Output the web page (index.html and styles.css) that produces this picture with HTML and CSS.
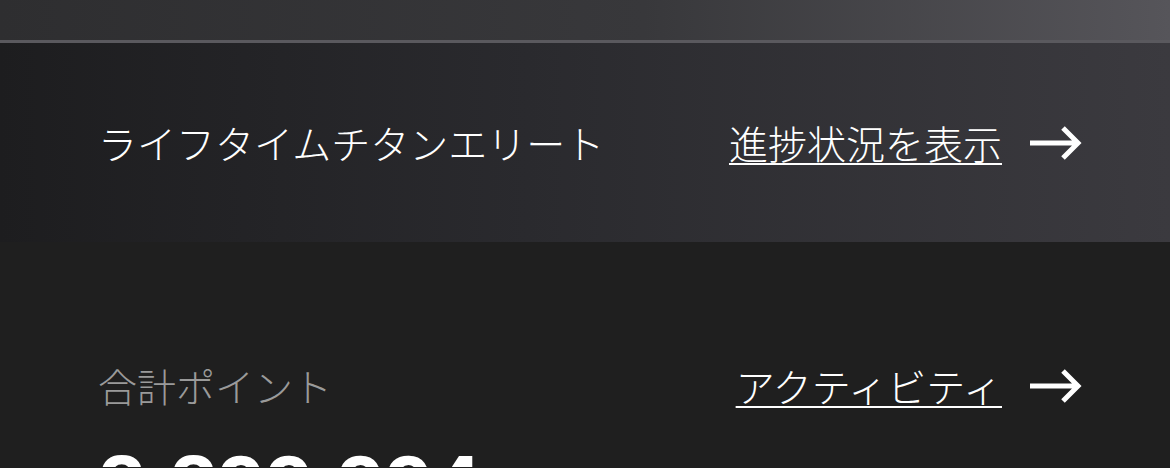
FILE: index.html
```html
<!DOCTYPE html>
<html lang="ja">
<head>
    <meta charset="UTF-8">
    <meta name="viewport" content="width=device-width, initial-scale=1.0">
    <title>メンバーシップ</title>
    <link rel="stylesheet" href="styles.css">
</head>
<body>
    <div class="top-bar"></div>

    <div class="tier-band">
        <div class="tier-name">ライフタイムチタンエリート</div>
        <a class="more-link" href="#">
            <span class="more-text">進捗状況を表示</span>
            <svg class="arrow" width="52" height="34" viewBox="0 0 52 34">
                <path d="M0 17H48M33 2L48 17L33 32" fill="none" stroke="#fff" stroke-width="5"/>
            </svg>
        </a>
    </div>

    <div class="points">
        <div class="points-row">
            <div class="points-label">合計ポイント</div>
            <a class="more-link" href="#">
                <span class="more-text">アクティビティ</span>
                <svg class="arrow" width="52" height="34" viewBox="0 0 52 34">
                    <path d="M0 17H48M33 2L48 17L33 32" fill="none" stroke="#fff" stroke-width="5"/>
                </svg>
            </a>
        </div>
        <div class="points-total">2,299,994</div>
    </div>
</body>
</html>
```

FILE: styles.css
```css
body, html {
    margin: 0;
    padding: 0;
    height: 468px;
    background-color: #1f1f1f;
    color: #fff;
    font-family: "Noto Sans CJK JP", "Noto Sans", sans-serif;
    font-weight: 300;
    overflow: hidden;
}

.top-bar {
    height: 40px;
    background: linear-gradient(90deg, #2e2e30 0%, #38383b 55%, #56555a 100%);
    border-bottom: 3px solid #5a595e;
}

.tier-band {
    height: 199px;
    display: flex;
    align-items: center;
    justify-content: space-between;
    padding: 0 88px 0 98px;
    background: linear-gradient(90deg, #1d1d1f 0%, #2a2a2e 45%, #3b3a3f 100%);
}

.tier-name {
    font-size: 39px;
    line-height: 1;
    color: #fff;
}

.more-link {
    display: flex;
    align-items: center;
    gap: 28px;
    color: #fff;
    text-decoration: none;
}

.more-text {
    font-size: 39px;
    line-height: 1;
    text-decoration: underline;
    text-decoration-thickness: 2px;
    text-underline-offset: 4px;
}

.arrow {
    display: block;
}

.points {
    height: 225px;
    padding: 124px 88px 0 98px;
    box-sizing: border-box;
    overflow: hidden;
}

.points-row {
    display: flex;
    align-items: center;
    justify-content: space-between;
}

.points-label {
    font-size: 39px;
    line-height: 1;
    color: #9a9a9a;
}

.points-total {
    margin-top: 37px;
    font-family: "Liberation Sans", Arial, sans-serif;
    font-weight: 700;
    font-size: 86px;
    line-height: 1;
}
```
